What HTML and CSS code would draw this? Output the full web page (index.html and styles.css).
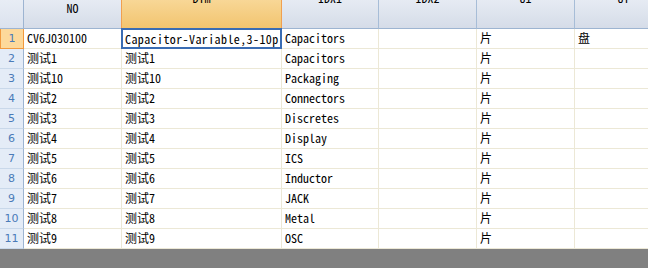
FILE: index.html
```html
<!DOCTYPE html>
<html>
<head>
<meta charset="utf-8">
<link rel="stylesheet" href="styles.css">
</head>
<body>
<div class="sheet">
  <div class="grid">
    <div class="hcell corner"></div>
    <div class="hcell"><span class="hlabel show">NO</span></div>
    <div class="hcell sel"><span class="hlabel">Dim</span></div>
    <div class="hcell"><span class="hlabel">IDX1</span></div>
    <div class="hcell"><span class="hlabel">IDX2</span></div>
    <div class="hcell"><span class="hlabel">U1</span></div>
    <div class="hcell"><span class="hlabel">UT</span></div>

    <div class="rh sel">1</div><div class="c">CV6J030100</div><div class="c active">Capacitor-Variable,3-10p</div><div class="c">Capacitors</div><div class="c"></div><div class="c">片</div><div class="c">盘</div>
    <div class="rh">2</div><div class="c">测试1</div><div class="c">测试1</div><div class="c">Capacitors</div><div class="c"></div><div class="c">片</div><div class="c"></div>
    <div class="rh">3</div><div class="c">测试10</div><div class="c">测试10</div><div class="c">Packaging</div><div class="c"></div><div class="c">片</div><div class="c"></div>
    <div class="rh">4</div><div class="c">测试2</div><div class="c">测试2</div><div class="c">Connectors</div><div class="c"></div><div class="c">片</div><div class="c"></div>
    <div class="rh">5</div><div class="c">测试3</div><div class="c">测试3</div><div class="c">Discretes</div><div class="c"></div><div class="c">片</div><div class="c"></div>
    <div class="rh">6</div><div class="c">测试4</div><div class="c">测试4</div><div class="c">Display</div><div class="c"></div><div class="c">片</div><div class="c"></div>
    <div class="rh">7</div><div class="c">测试5</div><div class="c">测试5</div><div class="c">ICS</div><div class="c"></div><div class="c">片</div><div class="c"></div>
    <div class="rh">8</div><div class="c">测试6</div><div class="c">测试6</div><div class="c">Inductor</div><div class="c"></div><div class="c">片</div><div class="c"></div>
    <div class="rh">9</div><div class="c">测试7</div><div class="c">测试7</div><div class="c">JACK</div><div class="c"></div><div class="c">片</div><div class="c"></div>
    <div class="rh">10</div><div class="c">测试8</div><div class="c">测试8</div><div class="c">Metal</div><div class="c"></div><div class="c">片</div><div class="c"></div>
    <div class="rh">11</div><div class="c">测试9</div><div class="c">测试9</div><div class="c">OSC</div><div class="c"></div><div class="c">片</div><div class="c"></div>
  </div>
</div>
</body>
</html>
```
FILE: styles.css
```css
html, body {
  margin: 0;
  padding: 0;
  background: #808080;
  overflow: hidden;
  width: 648px;
  height: 268px;
}
.sheet {
  width: 648px;
  height: 268px;
  overflow: hidden;
}
.grid {
  display: grid;
  grid-template-columns: 24px 98px 160px 97px 98px 98px 98px;
  grid-template-rows: 29px repeat(11, 20px);
  width: 673px;
  background: #ffffff;
  font-family: "Noto Sans Mono CJK SC", "Liberation Mono", "Noto Sans CJK SC", monospace;
  font-size: 12px;
  color: #000;
}
.hcell {
  box-sizing: border-box;
  background: linear-gradient(#e6ebf3, #d5dce8);
  border-right: 1px solid #a7bdd7;
  border-bottom: 1px solid #9db4d1;
  display: flex;
  justify-content: center;
  align-items: flex-start;
  overflow: hidden;
  color: #000;
}
.hcell.corner {
  background: linear-gradient(#e8edf5, #dbe2ee);
  border-right: 1px solid #9db4d1;
}
.hcell.sel {
  background: linear-gradient(#f8d796, #f2c46f);
  border: 1px solid #f0a050;
  border-top: none;
  margin-left: -1px;
}
.hlabel {
  line-height: 12px;
  margin-top: -8px;
}
.hlabel.show {
  margin-top: 2px;
}
.rh {
  box-sizing: border-box;
  background: #e4ecf7;
  border-right: 1px solid #9db4d1;
  border-bottom: 1px solid #c9d8ea;
  color: #4a7bb8;
  display: flex;
  align-items: center;
  justify-content: center;
  font-family: "DejaVu Sans", sans-serif;
  font-size: 11px;
}
.rh.sel {
  background: #fdd99b;
  border: 1px solid #f29a3e;
  border-top: none;
}
.c {
  box-sizing: border-box;
  border-right: 1px solid #ece8d6;
  border-bottom: 1px solid #ece8d6;
  padding-left: 3px;
  padding-bottom: 2px;
  display: flex;
  align-items: center;
  white-space: nowrap;
  overflow: hidden;
  background: #fff;
}
.c.active {
  border: 2px solid #3a6cb3;
  margin-left: -1px;
  margin-top: -1px;
  padding-left: 2px;
  padding-bottom: 1px;
  letter-spacing: 0.4px;
}
```
